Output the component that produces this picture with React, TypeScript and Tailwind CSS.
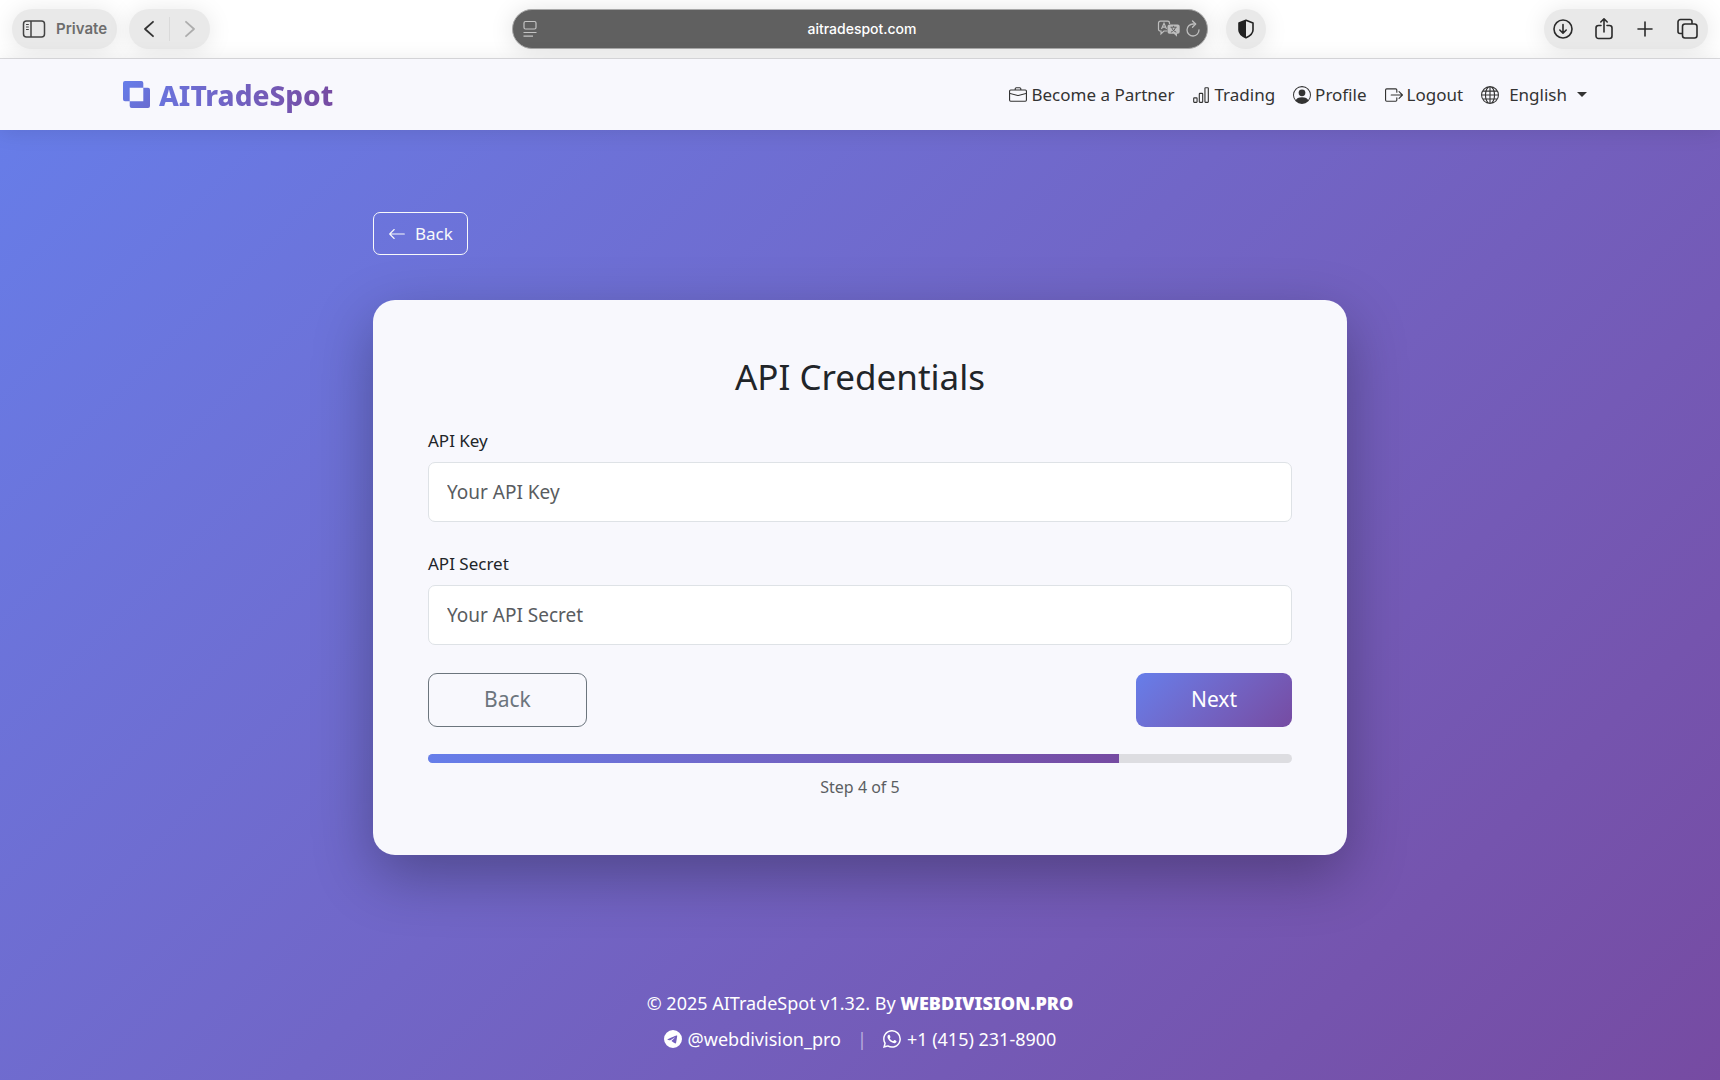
import React, { useState } from 'react';
import {
  BsArrowLeft,
  BsBarChart,
  BsBoxArrowRight,
  BsBriefcase,
  BsGlobe,
  BsPersonCircle,
  BsTelegram,
  BsWhatsapp,
} from 'react-icons/bs';

const navLinks = [
  { label: 'Become a Partner', icon: BsBriefcase },
  { label: 'Trading', icon: BsBarChart },
  { label: 'Profile', icon: BsPersonCircle },
  { label: 'Logout', icon: BsBoxArrowRight },
];

const fields = [
  { name: 'apiKey', label: 'API Key', placeholder: 'Your API Key' },
  { name: 'apiSecret', label: 'API Secret', placeholder: 'Your API Secret' },
];

const pill = 'flex h-10 items-center rounded-full bg-[#e9e9e9] shadow-[0_2px_24px_rgba(0,0,0,0.10)]';

const BrowserBar: React.FC = () => {
  const [address, setAddress] = useState('aitradespot.com');

  return (
    <div className="grid h-[59px] grid-cols-[1fr_41%_1fr] items-center overflow-hidden border-b border-[#dcdcdf] bg-white px-3 font-['Inter',sans-serif] text-[#2b2b2b]">
      <div className="flex gap-3">
        <button type="button" className={`${pill} gap-[10px] px-[10px]`}>
          <svg width="24" height="20" viewBox="0 0 24 20" fill="none" stroke="#444" strokeWidth="1.5">
            <rect x="1.5" y="2" width="21" height="16" rx="3" />
            <path d="M9 2v16" />
            <path d="M4 5.5h2.8M4 8h2.8M4 10.5h2.8" strokeWidth="1.1" />
          </svg>
          <span className="text-[15px] font-semibold text-[#6d6d6d]">Private</span>
        </button>
        <div className={pill}>
          <button type="button" aria-label="Previous page" className="flex h-10 w-10 items-center justify-center">
            <svg width="12" height="18" viewBox="0 0 12 18" fill="none" stroke="#333" strokeWidth="1.8" strokeLinecap="round" strokeLinejoin="round">
              <path d="M10 1.8 2 9l8 7.2" />
            </svg>
          </button>
          <span className="h-6 w-px bg-[#dadada]" />
          <button type="button" aria-label="Next page" className="flex h-10 w-10 items-center justify-center">
            <svg width="12" height="18" viewBox="0 0 12 18" fill="none" stroke="#adadad" strokeWidth="1.8" strokeLinecap="round" strokeLinejoin="round">
              <path d="m2 1.8 8 7.2-8 7.2" />
            </svg>
          </button>
        </div>
      </div>

      <div className="flex h-10 items-center rounded-full border border-[#a8a8a8] bg-[#606060] pr-[6px] pl-[10px] shadow-[0_2px_24px_rgba(0,0,0,0.12)]">
        <div className="flex w-12">
          <svg width="14" height="18" viewBox="0 0 14 18" fill="none" stroke="#c4c4c4" strokeWidth="1.2">
            <rect x="1" y="1.5" width="12" height="7.5" rx="1.5" />
            <path d="M.5 12.5h13M.5 16.2h9.5" />
          </svg>
        </div>
        <input
          aria-label="Address"
          value={address}
          onChange={e => setAddress(e.target.value)}
          className="min-w-0 flex-1 bg-transparent text-center text-sm font-medium text-white outline-none"
        />
        <div className="flex w-12 items-center justify-end gap-1">
          <button type="button" aria-label="Translate">
            <svg width="24" height="18" viewBox="0 0 24 18" fill="none" stroke="#bdbdbd" strokeWidth="1.2">
              <path d="M12.5 4V3a1.8 1.8 0 0 0-1.8-1.8H3.3A1.8 1.8 0 0 0 1.5 3v6.2A1.8 1.8 0 0 0 3.3 11H4v2.8L7 11h3" />
              <path d="M4.5 9 7 3.2 9.5 9M5.4 7.2h3.2" />
              <path d="M12.5 4.5h8.200a2 2 0 0 1 2 2v5.200a2 2 0 0 1-2 2H20v3l-3.200-3h-4.300a2 2 0 0 1-2-2V6.500a2 2 0 0 1 2-2Z" fill="#bdbdbd" stroke="none" />
              <path d="M13.500 7.200h6.200M16.600 5.800v1.400M18.500 7.400c-.6 2.300-2.400 4-4.600 4.800M14.700 7.400c.6 2.300 2.400 4 4.600 4.800" stroke="#606060" strokeWidth="1" />
            </svg>
          </button>
          <button type="button" aria-label="Reload">
            <svg width="16" height="18" viewBox="0 0 16 18" fill="none" stroke="#bdbdbd" strokeWidth="1.3" strokeLinecap="round" strokeLinejoin="round">
              <path d="M14 9.8A6 6 0 1 1 8 4h2.500" />
              <path d="M7.500 1 10.700 4 7.500 7.200" />
            </svg>
          </button>
        </div>
      </div>

      <div className="flex items-center justify-between pl-[18px]">
        <button type="button" aria-label="Privacy report" className={`${pill} w-10 justify-center`}>
          <svg width="18" height="20" viewBox="0 0 18 20">
            <path d="M9 1.2 16 4v7c0 3.5-3 5.9-7 7.8C5 16.9 2 14.5 2 11V4Z" fill="none" stroke="#222" strokeWidth="1.6" strokeLinejoin="round" />
            <path d="M9 1.2v17.6C5 16.9 2 14.5 2 11V4Z" fill="#222" />
          </svg>
        </button>
        <div className={`${pill} gap-5 px-2`}>
          <button type="button" aria-label="Downloads">
            <svg width="22" height="22" viewBox="0 0 22 22" fill="none" stroke="currentColor" strokeWidth="1.6" strokeLinecap="round" strokeLinejoin="round">
              <circle cx="11" cy="11" r="9" />
              <path d="M11 6.500v8.500M7.800 12l3.200 3.200 3.200-3.200" />
            </svg>
          </button>
          <button type="button" aria-label="Share">
            <svg width="20" height="24" viewBox="0 0 20 24" fill="none" stroke="currentColor" strokeWidth="1.6" strokeLinecap="round" strokeLinejoin="round">
              <path d="M7 8.500H4.500a2.500 2.500 0 0 0-2.500 2.500v8a2.500 2.500 0 0 0 2.500 2.500h11a2.500 2.500 0 0 0 2.500-2.500v-8a2.500 2.500 0 0 0-2.500-2.500H13" />
              <path d="M10 15V2M6.800 5 10 1.800 13.200 5" />
            </svg>
          </button>
          <button type="button" aria-label="New tab">
            <svg width="22" height="22" viewBox="0 0 22 22" fill="none" stroke="currentColor" strokeWidth="1.6" strokeLinecap="round">
              <path d="M11 4v14M4 11h14" />
            </svg>
          </button>
          <button type="button" aria-label="Tab overview">
            <svg width="24" height="22" viewBox="0 0 24 22" fill="none" stroke="currentColor" strokeWidth="1.6" strokeLinejoin="round">
              <rect x="6.500" y="6" width="14.500" height="14" rx="2.500" />
              <path d="M6 15.500H4A2 2 0 0 1 2 13.500V4a2.500 2.500 0 0 1 2.500-2.500h9.500A2 2 0 0 1 16 3.500V6" />
            </svg>
          </button>
        </div>
      </div>
    </div>
  );
};

const Navbar: React.FC = () => (
  <header className="bg-[#f8f8fd] shadow-[0_2px_20px_rgba(0,0,0,0.10)]">
    <div className="mx-auto flex h-[71px] w-full max-w-[1474px] items-center justify-between pr-[10px]">
      <a href="#" className="flex items-center gap-[9px]">
        <svg width="27" height="27" viewBox="0 0 27 27" className="shrink-0">
          <defs>
            <linearGradient id="logo" x1="0" y1="0" x2="1" y2="1">
              <stop offset="0" stopColor="#667eea" />
              <stop offset="1" stopColor="#6a6bd0" />
            </linearGradient>
          </defs>
          <path
            fill="url(#logo)"
            fillRule="evenodd"
            d="M0 2a2 2 0 0 1 2-2h16.300a2 2 0 0 1 2 2v4.700H25a2 2 0 0 1 2 2V25a2 2 0 0 1-2 2H8.700a2 2 0 0 1-2-2v-4.700H2a2 2 0 0 1-2-2V2Zm6.700 4.700v13.600h13.600V6.700H6.700Z"
          />
        </svg>
        <span className="bg-linear-to-r from-[#6a73dc] to-[#764ba2] bg-clip-text text-[28px] leading-10 font-extrabold text-transparent">
          AITradeSpot
        </span>
      </a>
      <nav className="flex items-center gap-[18px] text-[17px] text-[#333]">
        {navLinks.map(({ label, icon: Icon }) => (
          <a key={label} href="#" className="flex items-center gap-1">
            <Icon className="size-[18px]" />
            {label}
          </a>
        ))}
        <button type="button" className="flex items-center gap-[10px]">
          <BsGlobe className="size-[18px]" />
          English
          <svg width="10" height="5" viewBox="0 0 10 5" fill="currentColor">
            <path d="M0 0h10L5 5Z" />
          </svg>
        </button>
      </nav>
    </div>
  </header>
);

const CredentialsForm: React.FC = () => {
  const [formData, setFormData] = useState<Record<string, string>>({ apiKey: '', apiSecret: '' });
  const step = 4;
  const totalSteps = 5;

  const handleChange = (e: React.ChangeEvent<HTMLInputElement>) => {
    const { name, value } = e.target;
    setFormData(prev => ({ ...prev, [name]: value }));
  };

  return (
    <form
      onSubmit={e => e.preventDefault()}
      className="mt-[45px] rounded-[22px] bg-[#f8f8fd] px-[55px] pt-[55px] pb-14 shadow-[0_20px_60px_rgba(0,0,0,0.30)]"
    >
      <h1 className="mb-7 text-center text-[35px] leading-[44px] text-[#212529]">API Credentials</h1>
      {fields.map(field => (
        <div key={field.name} className="mb-7">
          <label htmlFor={field.name} className="mb-2 block text-[17px] leading-[27px] text-[#212529]">
            {field.label}
          </label>
          <input
            type="text"
            id={field.name}
            name={field.name}
            value={formData[field.name]}
            onChange={handleChange}
            placeholder={field.placeholder}
            className="block h-[60px] w-full rounded-[7px] border border-[#dee2e6] bg-white px-[18px] text-[19px] text-[#212529] placeholder:text-[#595c5f]"
          />
        </div>
      ))}
      <div className="flex justify-between text-[21px]">
        <button type="button" className="h-[54px] rounded-[9px] border border-[#6c757d] px-[55px] text-[#6c757d]">
          Back
        </button>
        <button type="submit" className="h-[54px] rounded-[9px] bg-linear-135 from-[#667eea] to-[#764ba2] px-[55px] text-white">
          Next
        </button>
      </div>
      <div className="mt-[27px] h-[9px] overflow-hidden rounded-full bg-[#dddde1]">
        <div
          className="h-full bg-linear-to-r from-[#667eea] to-[#764ba2]"
          style={{ width: `${(step / totalSteps) * 100}%` }}
        />
      </div>
      <p className="mt-3 text-center text-[16px] leading-6 text-[#5b5e62]">
        Step {step} of {totalSteps}
      </p>
    </form>
  );
};

const App: React.FC = () => {
  return (
    <div className="flex min-h-screen flex-col font-['Noto_Sans',sans-serif]">
      <BrowserBar />
      <div className="flex flex-1 flex-col bg-linear-135 from-[#667eea] to-[#764ba2]">
        <Navbar />
        <main className="mx-auto w-full max-w-[974px] pt-[82px]">
          <a
            href="#"
            className="inline-flex h-[43px] items-center gap-[9px] rounded-[7px] border border-[#f8f9fa] px-[14px] text-[17px] text-[#f8f9fa]"
          >
            <BsArrowLeft className="size-[18px]" />
            Back
          </a>
          <CredentialsForm />
        </main>
        <footer className="mt-auto flex flex-col items-center gap-2 pt-12 pb-[27px] text-[18px] leading-7 text-white">
          <p>
            © 2025 AITradeSpot v1.32. By{' '}
            <a href="#" className="font-black">
              WEBDIVISION.PRO
            </a>
          </p>
          <div className="flex items-center">
            <a href="#" className="flex items-center gap-[6px]">
              <BsTelegram className="size-[18px]" />
              @webdivision_pro
            </a>
            <span className="px-4 text-white/50">|</span>
            <a href="#" className="flex items-center gap-[6px]">
              <BsWhatsapp className="size-[18px]" />
              +1 (415) 231-8900
            </a>
          </div>
        </footer>
      </div>
    </div>
  );
};

export default App;
